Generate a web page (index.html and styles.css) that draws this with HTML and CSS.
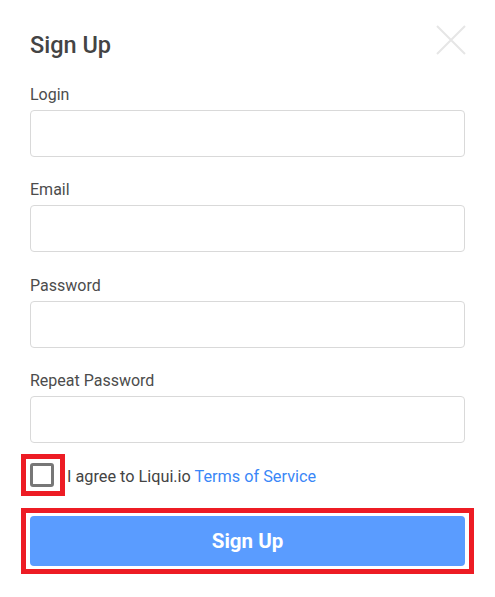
FILE: index.html
```html
<!DOCTYPE html>
<html lang="en">
<head>
  <meta charset="UTF-8" />
  <meta name="viewport" content="width=device-width, initial-scale=1.0"/>
  <title>Sign Up</title>
  <link rel="stylesheet" href="styles.css">
</head>
<body>
  <div class="modal">
    <div class="modal-header">
      <h2>Sign Up</h2>
      <button class="close-btn" title="Close">
        <svg width="30" height="30" viewBox="0 0 30 30">
          <path d="M1 1 L29 29 M29 1 L1 29" stroke="#e6e6e6" stroke-width="2" fill="none"/>
        </svg>
      </button>
    </div>

    <form class="signup-form">
      <label class="field">
        <span class="field-label">Login</span>
        <input type="text" class="field-input">
      </label>
      <label class="field">
        <span class="field-label">Email</span>
        <input type="email" class="field-input">
      </label>
      <label class="field">
        <span class="field-label">Password</span>
        <input type="password" class="field-input">
      </label>
      <label class="field">
        <span class="field-label">Repeat Password</span>
        <input type="password" class="field-input">
      </label>

      <div class="agree-row">
        <span class="highlight-box">
          <input type="checkbox" class="agree-check">
        </span>
        <span class="agree-text">I agree to Liqui.io <a href="#">Terms of Service</a></span>
      </div>

      <div class="highlight-btn">
        <button type="button" class="submit-btn">Sign Up</button>
      </div>
    </form>
  </div>
</body>
</html>
```

FILE: styles.css
```css
* {
  box-sizing: border-box;
  margin: 0;
  padding: 0;
}

body {
  font-family: Roboto, 'Liberation Sans', sans-serif;
  background: #fff;
  color: #444;
}

.modal {
  width: 495px;
  padding: 32px 30px 0 30px;
}

.modal-header {
  display: flex;
  justify-content: space-between;
  align-items: flex-start;
}

.modal-header h2 {
  font-size: 23.5px;
  line-height: 26px;
  font-weight: 500;
  color: #444;
}

.close-btn {
  border: none;
  background: none;
  width: 30px;
  height: 30px;
  margin-top: -7px;
  margin-right: -1px;
  cursor: pointer;
}

.signup-form {
  display: flex;
  flex-direction: column;
  margin-top: 28px;
}

.field {
  display: flex;
  flex-direction: column;
  gap: 6px;
  margin-bottom: 24.33px;
}

.field:last-of-type {
  margin-bottom: 11px;
}

.field-label {
  font-size: 16px;
  line-height: 18px;
  color: #4c4c4c;
}

.field-input {
  height: 47px;
  width: 100%;
  border: 1px solid #d9d9d9;
  border-radius: 4px;
  font-family: inherit;
  font-size: 15px;
  padding: 0 12px;
}

.agree-row {
  display: flex;
  align-items: center;
  margin-left: -9px;
}

.highlight-box {
  display: inline-flex;
  border: 5px solid #ed1c24;
  padding: 4px 6px 4px 4px;
}

.agree-check {
  appearance: none;
  width: 24px;
  height: 24px;
  border: 3px solid #777;
  border-radius: 3px;
  background: #fff;
  cursor: pointer;
}

.agree-text {
  margin-left: 2px;
  margin-top: 4px;
  font-size: 16.25px;
  line-height: 20px;
  color: #444;
}

.agree-text a {
  color: #3a87f7;
  text-decoration: none;
}

.highlight-btn {
  margin: 12px -9px 0 -9px;
  border: 5px solid #ed1c24;
  padding: 3px 4px;
}

.submit-btn {
  display: block;
  height: 50px;
  width: 100%;
  border: none;
  border-radius: 4px;
  background: #5a9cff;
  color: #fff;
  font-family: inherit;
  font-size: 20.5px;
  font-weight: 700;
  cursor: pointer;
}
```
